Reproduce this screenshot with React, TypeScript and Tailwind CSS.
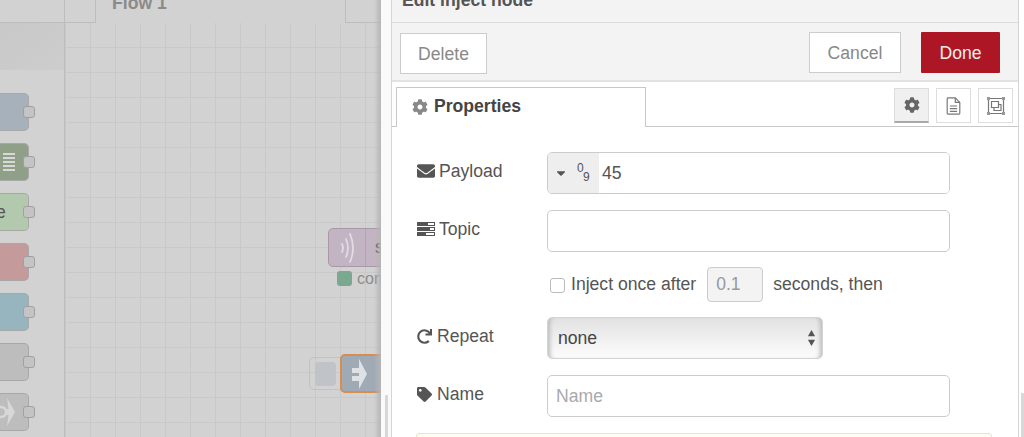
import React from 'react';
import { FaCog, FaEnvelope, FaRedo, FaTag, FaCaretDown } from 'react-icons/fa';

const paletteColors = ['bg-[#a6b1bb]', 'bg-[#8f9f88]', 'bg-[#b3c9ae]', 'bg-[#c49a9a]', 'bg-[#96b5bf]', 'bg-[#bdbdbd]', 'bg-[#bdbdbd]'];

const TasksIcon: React.FC = () => (
    <svg viewBox="0 0 18 14" className="h-[14px] w-[18px]" fill="#555">
        <path d="M0 0h18v4H0z M11 1v2h6V1z" fillRule="evenodd" />
        <path d="M0 5h18v4H0z M13 6v2h4V6z" fillRule="evenodd" />
        <path d="M0 10h18v4H0z M9 11v2h8v-2z" fillRule="evenodd" />
    </svg>
);

const DocIcon: React.FC = () => (
    <svg viewBox="0 0 16 20" className="h-[18px] w-[15px]" fill="none" stroke="#777" strokeWidth={1.3}>
        <path d="M1 2a1 1 0 011-1h8l5 5v12a1 1 0 01-1 1H2a1 1 0 01-1-1z" />
        <path d="M10 1v5h5 M4 10h8 M4 13h8 M4 16h8" />
    </svg>
);

const FrameIcon: React.FC = () => (
    <svg viewBox="0 0 20 20" className="h-[20px] w-[20px]" fill="none" stroke="#777" strokeWidth={1.2}>
        <path d="M2.5 2.5h15v15h-15z" />
        <path d="M5.5 5.5h7v6h-7z M8 11.5v3h7v-6h-2.5" />
        <g fill="#999" stroke="none">
            <rect x="1" y="1" width="3" height="3" />
            <rect x="16" y="1" width="3" height="3" />
            <rect x="1" y="16" width="3" height="3" />
            <rect x="16" y="16" width="3" height="3" />
        </g>
    </svg>
);

const PaletteNode: React.FC<{ color: string; children?: React.ReactNode }> = ({ color, children }) => (
    <div className={`relative h-[38px] w-[29px] rounded-r-[5px] border border-l-0 border-[#a8a8a8] ${color}`}>
        <div className="flex h-full items-center overflow-hidden text-[17.6px] text-[#555]">{children}</div>
        <div className="absolute right-[-7px] top-[12px] h-[12px] w-[12px] rounded-[3px] border border-[#a0a0a0] bg-[#c4c4c4]" />
    </div>
);

const Row: React.FC<{ icon: React.ReactNode; label: string; children: React.ReactNode; gap?: string }> = ({ icon, label, children, gap = 'gap-[5px]' }) => (
    <div className="flex items-center">
        <div className={`mt-[-3px] flex w-[131px] items-center pl-[1px] text-[#555] ${gap}`}>
            {icon}
            <span>{label}</span>
        </div>
        {children}
    </div>
);

const Workspace: React.FC = () => (
    <div className="relative flex h-full w-[381px] flex-col overflow-hidden bg-[#d2d2d2]">
        <div className="flex h-[23px] shrink-0">
            <div className="h-full w-[65px] border-r border-b border-[#bdbdbd]" />
            <div className="h-full w-[31px] border-r border-b border-[#bdbdbd]" />
            <div className="h-full w-[249px] pl-[16px] text-[17.6px] font-bold leading-[7px] text-[#8a8a8a]">Flow 1</div>
            <div className="h-full flex-1 border-l border-b border-[#bdbdbd]" />
        </div>
        <div className="flex min-h-0 flex-1">
            <div className="flex w-[65px] shrink-0 flex-col border-r border-[#bdbdbd]">
                <div className="h-[47px] shrink-0 bg-linear-to-br from-[#c8c8c8] to-[#cdcdcd]" />
                <div className="flex flex-col gap-[12px] pt-[23px]">
                    <PaletteNode color={paletteColors[0]} />
                    <PaletteNode color={paletteColors[1]}>
                        <div className="ml-[3px] flex flex-col gap-[2px]">
                            <div className="h-[2px] w-[12px] bg-[#d8d8d8]" />
                            <div className="h-[2px] w-[12px] bg-[#d8d8d8]" />
                            <div className="h-[2px] w-[12px] bg-[#d8d8d8]" />
                            <div className="h-[2px] w-[12px] bg-[#d8d8d8]" />
                            <div className="h-[2px] w-[12px] bg-[#d8d8d8]" />
                        </div>
                    </PaletteNode>
                    <PaletteNode color={paletteColors[2]}><span className="ml-[-4px]">e</span></PaletteNode>
                    <PaletteNode color={paletteColors[3]} />
                    <PaletteNode color={paletteColors[4]} />
                    <PaletteNode color={paletteColors[5]} />
                    <PaletteNode color={paletteColors[6]}>
                        <svg viewBox="0 0 16 30" className="h-[30px] w-[16px]" fill="none">
                            <circle cx="1" cy="15" r="5" stroke="#d8d8d8" strokeWidth={2.5} />
                            <path d="M7 1l8 14-8 14 2-14z" fill="#d8d8d8" />
                            <path d="M6 12h4v6H6z" fill="#d8d8d8" />
                        </svg>
                    </PaletteNode>
                </div>
            </div>
            <div className="relative flex-1 bg-[linear-gradient(#c9c9c9_1px,transparent_1px),linear-gradient(90deg,#c9c9c9_1px,transparent_1px)] bg-[size:25px_25px] bg-[position:0_-1px]">
                {/* nodes on the flow canvas */}
                <div className="absolute left-[263px] top-[205px] flex h-[39px] w-[60px] rounded-[5px] border border-[#a898a8] bg-[#c3b4c3]">
                    <div className="flex w-[37px] items-center justify-center border-r border-[#b3a3b3]">
                        <svg viewBox="0 0 16 32" className="h-[32px] w-[16px]" fill="none" stroke="#e2dce2" strokeWidth={1.8} strokeLinecap="round">
                            <path d="M3 12q2 4 0 8 M7 7q4 9 0 18 M11 2q6 14 0 28" />
                        </svg>
                    </div>
                    <span className="pl-[9px] text-[17.6px] leading-[37px] text-[#444]">s</span>
                </div>
                <div className="absolute left-[272px] top-[243px] flex items-center gap-[5px]">
                    <div className="h-[15px] w-[15px] rounded-[3px] bg-[#7ba890]" />
                    <span className="mt-[1px] text-[16px] text-[#8c8c8c]">con</span>
                </div>
                <div className="absolute left-[244px] top-[334px] flex h-[33px] w-[40px] items-center rounded-[5px] border border-[#c2c2c2] pl-[5px]">
                    <div className="h-[24px] w-[21px] rounded-[4px] bg-[#c0c3c7]" />
                </div>
                <div className="absolute left-[275px] top-[331px] flex h-[39px] w-[60px] items-center rounded-[5px] border-2 border-[#d68d52] bg-[#a0aab4] pl-[9px]">
                    <svg viewBox="0 0 17 30" className="h-[30px] w-[17px]" fill="#dfe2e5">
                        <path d="M8 0l8 15-8 15z" />
                        <path d="M1 9h9v5H1z M1 17h9v5H1z" />
                    </svg>
                </div>
            </div>
        </div>
        <div className="absolute inset-y-0 right-0 w-[7px] bg-linear-to-r from-transparent to-[#b5b5b5]" />
    </div>
);

const Panel: React.FC = () => (
    <div className="flex h-full w-[628px] shrink-0 flex-col overflow-hidden border-x border-[#d4d4d4] bg-white">
        <div className="h-[23px] shrink-0 border-b border-[#dcdcdc] bg-[#f3f3f3] pl-[10px] text-[17.6px] font-bold leading-[1px] text-[#555]">Edit inject node</div>
        <div className="flex h-[59px] shrink-0 items-center justify-between border-b-2 border-[#e2e2e2] bg-[#f3f3f3] pl-[8px] pr-[18px]">
            <button className="mt-[3px] h-[41px] w-[87px] border border-[#ccc] bg-white pt-[2px] text-[#888]">Delete</button>
            <div className="mt-[1px] flex gap-[20px]">
                <button className="h-[41px] w-[92px] border border-[#ccc] bg-white pt-[2px] text-[#888]">Cancel</button>
                <button className="h-[41px] w-[79px] rounded-[1px] bg-[#ad1625] pt-[2px] text-[#eee]">Done</button>
            </div>
        </div>
        <div className="flex h-[45px] shrink-0 items-end justify-between border-b border-[#c8c8c8] pl-[4px] pr-[5px]">
            <div className="mb-[-1px] flex h-[40px] w-[250px] items-center gap-[6px] border border-b-0 border-[#c8c8c8] bg-white pb-[2px] pl-[15px] font-bold text-[#444]">
                <FaCog className="h-[16px] w-[16px] text-[#888]" />
                <span>Properties</span>
            </div>
            <div className="mb-[3px] flex gap-[7px]">
                <div className="flex h-[35px] w-[35px] items-center justify-center border border-[#ddd] border-b-[2px] border-b-[#aaa] bg-[#f0f0f0]">
                    <FaCog className="h-[16px] w-[16px] text-[#666]" />
                </div>
                <div className="flex h-[35px] w-[35px] items-center justify-center border border-[#ddd] bg-white"><DocIcon /></div>
                <div className="flex h-[35px] w-[35px] items-center justify-center border border-[#ddd] bg-white"><FrameIcon /></div>
            </div>
        </div>
        <div className="flex flex-col pl-[24px] pt-[25px]">
            <Row icon={<FaEnvelope className="h-[18px] w-[18px] text-[#555]" />} label="Payload" gap="gap-[4px]">
                <div className="flex h-[42px] w-[403px] overflow-hidden rounded-[5px] border border-[#ccc]">
                    <div className="flex w-[51px] items-center gap-[9px] bg-[#eeeeee] pl-[6px] text-[#555]">
                        <FaCaretDown className="h-[14px] w-[14px]" />
                        <span className="flex flex-col text-[12px] leading-[9px]"><span>0</span><span className="pl-[6px]">9</span></span>
                    </div>
                    <input readOnly value="45" className="min-w-0 flex-1 bg-white pl-[3px] text-[#555] outline-none" />
                </div>
            </Row>
            <div className="mt-[16px]">
                <Row icon={<TasksIcon />} label="Topic" gap="gap-[4px]">
                    <input readOnly className="h-[42px] w-[403px] rounded-[5px] border border-[#ccc] outline-none" />
                </Row>
            </div>
            <div className="ml-[131px] mt-[15px] flex h-[36px] items-center text-[#555]">
                <div className="ml-[3px] mt-[1px] h-[15px] w-[15px] rounded-[3px] border border-[#bbb] bg-white" />
                <span className="ml-[6px] mt-[-2px]">Inject once after</span>
                <input readOnly value="0.1" className="ml-[11px] mt-[-1px] h-[35px] w-[56px] rounded-[4px] border border-[#ccc] bg-[#f3f3f3] pl-[8px] text-[#999] outline-none" />
                <span className="ml-[10px] mt-[-2px]">seconds, then</span>
            </div>
            <div className="mt-[14px]">
                <Row icon={<FaRedo className="h-[15px] w-[15px] text-[#555]" />} label="Repeat" gap="gap-[5px]">
                    <div className="flex h-[42px] w-[276px] items-center justify-between rounded-[5px] border border-[#d4d4d4] bg-linear-to-b from-[#e2e2e2] to-[#fcfcfc] pl-[10px] pr-[6px] text-[#444] shadow-[inset_5px_0_4px_-3px_#bbb,inset_-5px_0_4px_-3px_#bbb]">
                        <span>none</span>
                        <svg viewBox="0 0 10 18" className="h-[18px] w-[9px]" fill="#555"><path d="M5 0l4 7H1z M5 18l-4-7h8z" /></svg>
                    </div>
                </Row>
            </div>
            <div className="mt-[16px]">
                <Row icon={<FaTag className="h-[15px] w-[15px] text-[#555]" />} label="Name" gap="gap-[5px]">
                    <input readOnly placeholder="Name" className="h-[42px] w-[403px] rounded-[5px] border border-[#ccc] pl-[8px] outline-none placeholder:text-[#aaa]" />
                </Row>
            </div>
            <div className="mt-[16px] h-[20px] w-[576px] rounded-t-[3px] border border-[#e6e6cf] bg-[#fdfdf0]" />
        </div>
    </div>
);

export default function App() {
    return (
        <div className="relative flex h-[437px] w-[1024px] overflow-hidden bg-white font-['Liberation_Sans',Arial,sans-serif] text-[17.6px]">
            <Workspace />
            <div className="h-full w-[10px] shrink-0 bg-[#fafafa]" />
            <Panel />
            <div className="absolute left-[385px] top-[395px] h-[42px] w-[3px] bg-[#d8d8d8]" />
            <div className="absolute left-[1021px] top-[393px] h-[44px] w-[3px] bg-[#d8d8d8]" />
        </div>
    );
}
